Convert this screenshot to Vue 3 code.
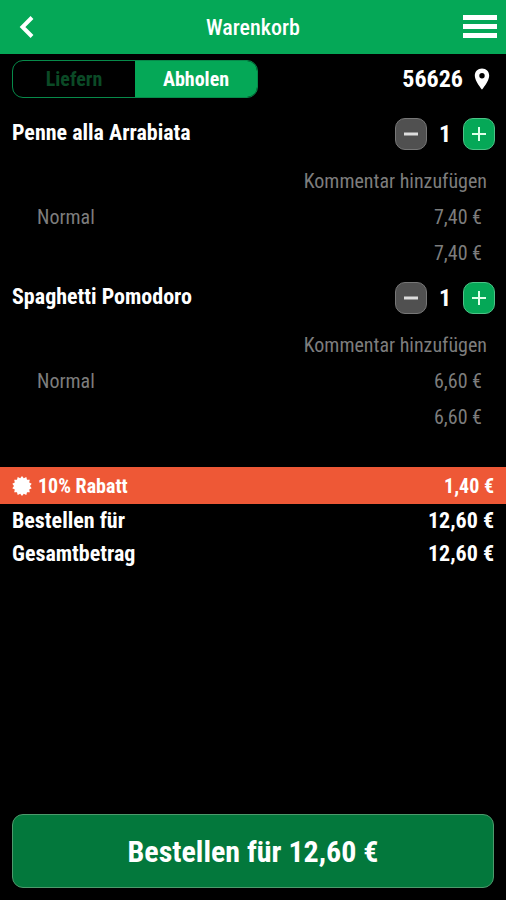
<template>
  <div class="cart">
    <header class="topbar">
      <button class="icon-btn" type="button" aria-label="Zurück">
        <svg width="16" height="24" viewBox="0 0 16 24">
          <path d="M13 2.5 3.5 12 13 21.5" fill="none" stroke="#fff" stroke-width="4" />
        </svg>
      </button>
      <h1>Warenkorb</h1>
      <button class="icon-btn" type="button" aria-label="Menü">
        <svg width="34" height="24" viewBox="0 0 34 24">
          <path d="M0 0h34v5H0zM0 9h34v5H0zM0 18h34v5H0z" fill="#fff" />
        </svg>
      </button>
    </header>

    <div class="delivery">
      <div class="toggle" role="radiogroup" aria-label="Bestellart">
        <label v-for="m in modes" :key="m" :class="{ active: mode === m }">
          <input v-model="mode" type="radio" name="mode" :value="m" />
          <span>{{ m }}</span>
        </label>
      </div>
      <button class="zip" type="button">
        <span>56626</span>
        <svg width="16" height="22" viewBox="0 0 16 22">
          <path
            d="M8 .5C3.800.5.8 3.600.8 7.700.8 13 8 21.500 8 21.500S15.200 13 15.200 7.700C15.200 3.600 12.200.5 8 .5zM8 10.400a2.700 2.700 0 1 1 0-5.400 2.700 2.700 0 0 1 0 5.400z"
            fill="#fff"
          />
        </svg>
      </button>
    </div>

    <main>
      <section v-for="item in items" :key="item.name" class="item">
        <div class="item-head">
          <h2>{{ item.name }}</h2>
          <div class="stepper">
            <button class="step minus" type="button" aria-label="Weniger" @click="remove(item)">
              <svg width="16" height="16" viewBox="0 0 16 16">
                <path d="M1 8h14" stroke="#ddd" stroke-width="3" />
              </svg>
            </button>
            <span class="count">{{ item.count }}</span>
            <button class="step plus" type="button" aria-label="Mehr" @click="item.count++">
              <svg width="16" height="16" viewBox="0 0 16 16">
                <path d="M1 8h14M8 1v14" stroke="#dfffe9" stroke-width="2" />
              </svg>
            </button>
          </div>
        </div>
        <button class="comment" type="button">Kommentar hinzufügen</button>
        <div class="line">
          <span>Normal</span>
          <span>{{ euro(item.price) }}</span>
        </div>
        <div class="line sum">
          <span>{{ euro(item.price * item.count) }}</span>
        </div>
      </section>
    </main>

    <div class="discount">
      <svg width="20" height="20" viewBox="0 0 20 20">
        <polygon :points="badge" fill="#fff" />
      </svg>
      <span>10% Rabatt</span>
      <span class="amount">{{ euro(discount) }}</span>
    </div>
    <div class="total">
      <span>Bestellen für</span>
      <span>{{ euro(total) }}</span>
    </div>
    <div class="total">
      <span>Gesamtbetrag</span>
      <span>{{ euro(total) }}</span>
    </div>

    <footer>
      <button class="order" type="button">Bestellen für {{ euro(total) }}</button>
    </footer>
  </div>
</template>

<script setup>
import { ref, computed } from "vue";

const modes = ["Liefern", "Abholen"];
const mode = ref("Abholen");

const items = ref([
  { name: "Penne alla Arrabiata", price: 7.4, count: 1 },
  { name: "Spaghetti Pomodoro", price: 6.6, count: 1 },
]);

const subtotal = computed(() => items.value.reduce((sum, i) => sum + i.price * i.count, 0));
const discount = computed(() => subtotal.value * 0.1);
const total = computed(() => subtotal.value - discount.value);

function remove(item) {
  if (item.count > 1) item.count--;
}

function euro(value) {
  return value.toFixed(2).replace(".", ",") + " €";
}

// 14 pointed badge
const badge = Array.from({ length: 28 }, (_, i) => {
  const r = i % 2 ? 8 : 10;
  const a = (i * Math.PI) / 14;
  return `${(10 + r * Math.sin(a)).toFixed(1)},${(10 - r * Math.cos(a)).toFixed(1)}`;
}).join(" ");
</script>

<style>
body {
  margin: 0;
  background: #000;
}
</style>

<style scoped>
.cart {
  display: flex;
  flex-direction: column;
  min-height: 100vh;
  background: #000;
  color: #fff;
  font-family: "Roboto Condensed", Roboto, sans-serif;
  font-size: 20px;
}

button {
  padding: 0;
  border: none;
  background: none;
  color: inherit;
  font: inherit;
  cursor: pointer;
}

svg {
  display: block;
}

h1,
h2 {
  margin: 0;
}

.topbar {
  display: grid;
  grid-template-columns: 40px 1fr 40px;
  align-items: center;
  height: 54px;
  padding: 0 9px;
  background: #05a857;
}

.topbar h1 {
  font-size: 22px;
  font-weight: 500;
  text-align: center;
}

.icon-btn:first-child {
  padding-left: 10px;
}

.icon-btn:last-child {
  justify-self: end;
}

.delivery {
  display: flex;
  align-items: center;
  justify-content: space-between;
  padding: 6px 16px 9px 12px;
}

.toggle {
  display: grid;
  grid-template-columns: 1fr 1fr;
  box-sizing: border-box;
  width: 246px;
  height: 38px;
  border: 1px solid #078a4a;
  border-radius: 11px;
  overflow: hidden;
  font-weight: 700;
}

.toggle label {
  display: flex;
  align-items: center;
  justify-content: center;
  color: #0b4a26;
  cursor: pointer;
}

.toggle label.active {
  background: #05a857;
  color: #fff;
}

.toggle input {
  appearance: none;
  width: 0;
  height: 0;
  margin: 0;
}

.zip {
  display: flex;
  align-items: center;
  gap: 11px;
  font-size: 24px;
  font-weight: 700;
}

.item-head {
  display: flex;
  align-items: center;
  justify-content: space-between;
  box-sizing: border-box;
  height: 56px;
  padding: 0 11px 2px 12px;
}

.item-head h2 {
  padding-bottom: 4px;
  font-size: 22px;
  font-weight: 700;
}

.stepper {
  display: flex;
  align-items: center;
}

.step {
  display: flex;
  align-items: center;
  justify-content: center;
  box-sizing: border-box;
  width: 32px;
  height: 32px;
  border: 1px solid #777;
  border-radius: 10px;
  background: #505050;
}

.step.plus {
  border-color: #4dc387;
  background: #05a857;
}

.count {
  width: 36px;
  font-size: 24px;
  font-weight: 700;
  text-align: center;
}

.comment {
  display: block;
  height: 36px;
  margin: 0 19px 0 auto;
  color: #7d7d7d;
}

.line {
  display: flex;
  align-items: center;
  justify-content: space-between;
  height: 36px;
  padding: 0 24px 0 37px;
  color: #7d7d7d;
}

.line.sum {
  justify-content: flex-end;
}

.discount {
  display: flex;
  align-items: center;
  gap: 6px;
  height: 37px;
  margin-top: 32px;
  padding: 0 12px;
  background: #ee5836;
  font-weight: 700;
}

.discount .amount {
  margin-left: auto;
}

.total {
  display: flex;
  align-items: center;
  justify-content: space-between;
  height: 33px;
  padding: 0 12px;
  font-size: 22px;
  font-weight: 700;
}

footer {
  margin-top: auto;
  padding: 12px;
}

.order {
  display: block;
  box-sizing: border-box;
  width: 100%;
  height: 74px;
  border: 1px solid #4d9a6c;
  border-radius: 11px;
  background: #03783c;
  font-size: 30px;
  font-weight: 700;
}
</style>
